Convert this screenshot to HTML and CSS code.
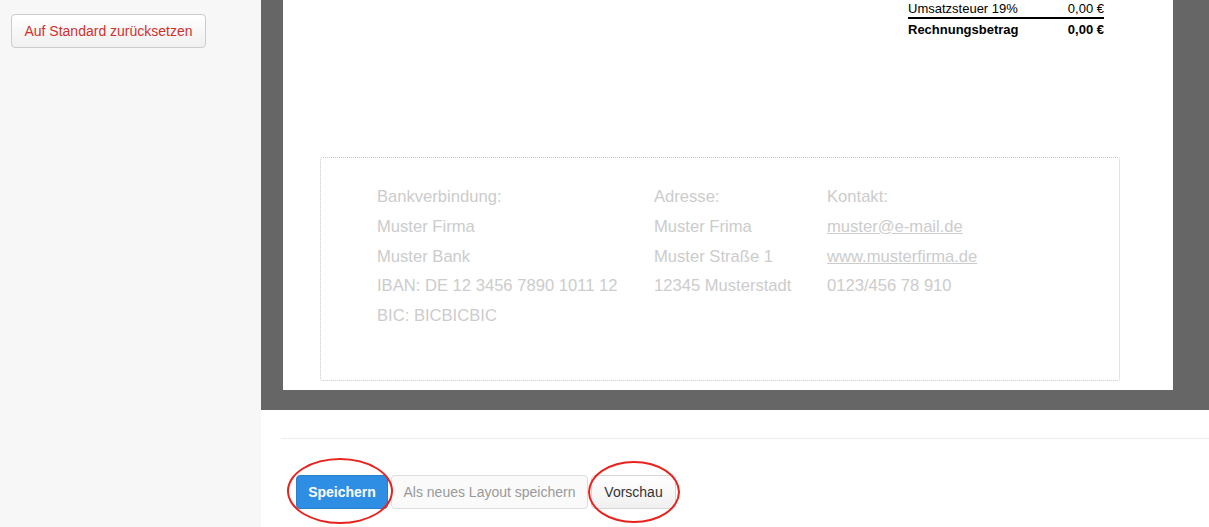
FILE: index.html
```html
<!DOCTYPE html>
<html lang="de">
<head>
<meta charset="utf-8">
<title>Layout</title>
<link rel="stylesheet" href="styles.css">
</head>
<body>
<div class="app">
  <aside class="sidebar">
    <button class="btn btn-reset">Auf Standard zurücksetzen</button>
  </aside>
  <main class="main">
    <section class="preview">
      <div class="paper">
        <div class="totals">
          <div class="row row-tax"><span>Umsatzsteuer 19%</span><span>0,00 €</span></div>
          <div class="row row-total"><span>Rechnungsbetrag</span><span>0,00 €</span></div>
        </div>
        <div class="footer-box">
          <div class="col col-bank">
            <p>Bankverbindung:</p>
            <p>Muster Firma</p>
            <p>Muster Bank</p>
            <p>IBAN: DE 12 3456 7890 1011 12</p>
            <p>BIC: BICBICBIC</p>
          </div>
          <div class="col col-addr">
            <p>Adresse:</p>
            <p>Muster Frima</p>
            <p>Muster Straße 1</p>
            <p>12345 Musterstadt</p>
          </div>
          <div class="col col-contact">
            <p>Kontakt:</p>
            <p><a href="#">muster@e-mail.de</a></p>
            <p><a href="#">www.musterfirma.de</a></p>
            <p>0123/456 78 910</p>
          </div>
        </div>
      </div>
    </section>
    <section class="actions">
      <div class="actions-line"></div>
      <div class="btn-row">
        <button class="btn btn-primary">Speichern</button>
        <button class="btn btn-muted">Als neues Layout speichern</button>
        <button class="btn btn-default">Vorschau</button>
        <span class="mark mark-save"></span>
        <span class="mark mark-preview"></span>
      </div>
    </section>
  </main>
</div>
</body>
</html>
```
FILE: styles.css
```css
* { box-sizing: border-box; }
html, body { margin: 0; padding: 0; }
body {
  font-family: "Liberation Sans", Arial, Helvetica, sans-serif;
  background: #fff;
  color: #333;
}
.app {
  display: flex;
  width: 1209px;
  height: 527px;
  overflow: hidden;
}
.sidebar {
  width: 261px;
  flex: 0 0 261px;
  background: #f7f7f7;
  padding: 14px 0 0 11px;
}
.btn {
  font-family: "Liberation Sans", Arial, Helvetica, sans-serif;
  font-size: 14px;
  height: 34px;
  border-radius: 4px;
  padding: 0 12px;
  cursor: pointer;
  line-height: 32px;
}
.btn-reset {
  width: 195px;
  height: 34px;
  color: #d0312d;
  background: linear-gradient(#ffffff, #f0f0f0);
  border: 1px solid #cccccc;
  padding: 0;
}
.main {
  flex: 1;
  display: flex;
  flex-direction: column;
}
.preview {
  background: #666666;
  height: 410px;
  padding: 0 36px 0 22px;
}
.paper {
  background: #fff;
  height: 390px;
  display: flex;
  flex-direction: column;
}
.totals {
  margin-left: 625px;
  width: 196px;
  font-size: 13px;
  color: #000;
}
.row {
  display: flex;
  justify-content: space-between;
  line-height: 17px;
}
.row-tax {
  border-bottom: 2px solid #000;
}
.row-total {
  font-weight: bold;
  line-height: 20px;
  padding-top: 1px;
}
.footer-box {
  margin: 117px 0 0 37px;
  width: 800px;
  height: 224px;
  border: 1px dotted #c8c8c8;
  border-radius: 3px;
  padding: 24px 0 0 56px;
  display: flex;
  font-size: 16.6px;
  color: #cccccc;
}
.footer-box p {
  margin: 0;
  line-height: 29.75px;
  white-space: nowrap;
}
.footer-box a {
  color: #cccccc;
  text-decoration: underline;
}
.col-bank { width: 277px; }
.col-addr { width: 173px; }
.actions {
  padding: 28px 0 0 20px;
}
.actions-line {
  height: 1px;
  background: #ececec;
}
.btn-row {
  position: relative;
  display: flex;
  gap: 3px;
  margin: 36px 0 0 15px;
}
.btn-primary {
  background: #2e8ee3;
  border: 1px solid #2a7fcc;
  color: #fff;
  width: 92px;
  height: 34px;
  padding: 0;
  font-weight: bold;
}
.btn-muted {
  background: #fafafa;
  border: 1px solid #dddddd;
  color: #999;
  width: 197px;
  padding: 0;
}
.btn-default {
  background: linear-gradient(#ffffff, #f0f0f0);
  border: 1px solid #d6d6d6;
  color: #333;
  width: 85px;
  padding: 0;
}
.mark {
  position: absolute;
  border: 2.5px solid #e8231d;
  border-radius: 50%;
  pointer-events: none;
}
.mark-save {
  left: -9px;
  top: -17px;
  width: 106px;
  height: 66px;
}
.mark-preview {
  left: 292px;
  top: -14px;
  width: 92px;
  height: 62px;
}
```
